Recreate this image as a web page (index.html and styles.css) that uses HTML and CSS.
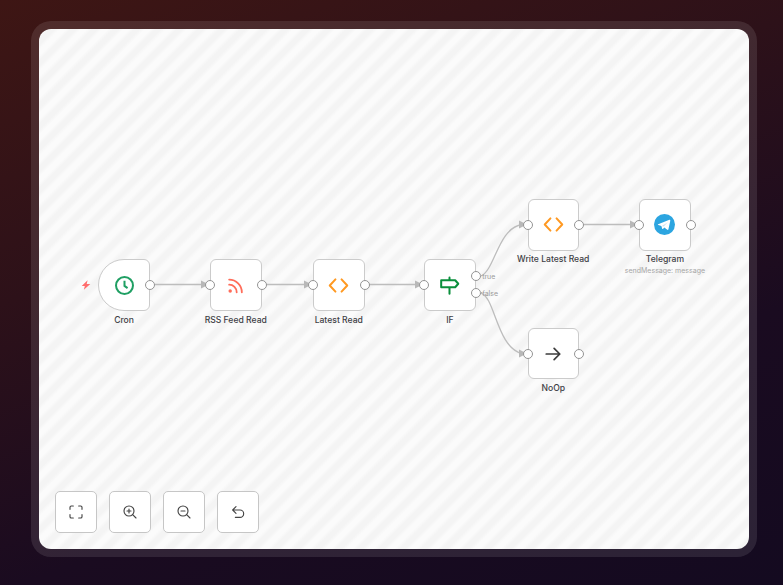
FILE: index.html
```html
<!DOCTYPE html>
<html lang="en">
<head>
<meta charset="utf-8">
<title>Workflow</title>
<link rel="stylesheet" href="styles.css">
</head>
<body>
<main class="stage">
  <div class="frame">
    <section class="canvas">
      <svg class="wires" width="710" height="520" viewBox="0 0 710 520">
        <g class="wire">
          <path d="M116 255.500H166"/>
          <path d="M227 255.500H269"/>
          <path d="M330 255.500H380"/>
          <path d="M442 247C456 241 459 199 483 195.500"/>
          <path d="M442 264C456 268 458 319 483 324.500"/>
          <path d="M545 195.500H592"/>
        </g>
        <g class="head">
          <path d="M162 251.500L170 255.500L162 259.500Z"/>
          <path d="M265 251.500L273 255.500L265 259.500Z"/>
          <path d="M376 251.500L384 255.500L376 259.500Z"/>
          <path d="M480 191.500L488 195.500L480 199.500Z"/>
          <path d="M480 320.500L488 324.500L480 328.500Z"/>
          <path d="M591 191.500L599 195.500L591 199.500Z"/>
        </g>
      </svg>

      <svg class="bolt" viewBox="0 0 10 10" width="10" height="10"><path d="M6.600 0.300L0.700 5.900H3.800L2.900 9.700L9.300 4H5.700Z"/></svg>

      <article class="node n-cron">
        <div class="box box-trigger">
          <svg class="icon" viewBox="0 0 24 24"><circle cx="12" cy="12" r="9.700" class="s-green"/><path d="M12 6.500V12.500L15.500 15" class="s-green"/></svg>
        </div>
        <span class="port out"></span>
        <p class="label">Cron</p>
      </article>

      <article class="node n-rss">
        <div class="box">
          <svg class="icon icon-rss" viewBox="0 0 24 24"><path d="M4 11A9.500 9.500 0 0 1 13.500 20.500M4 4.500A16 16 0 0 1 20 20.500" class="s-coral"/><circle cx="5.300" cy="19" r="2.200" class="f-coral"/></svg>
        </div>
        <span class="port in"></span><span class="port out"></span>
        <p class="label">RSS Feed Read</p>
      </article>

      <article class="node n-latest">
        <div class="box">
          <svg class="icon" viewBox="0 0 24 24"><path d="M8.500 5L2 12L8.500 19M15.500 5L22 12L15.500 19" class="s-orange"/></svg>
        </div>
        <span class="port in"></span><span class="port out"></span>
        <p class="label">Latest Read</p>
      </article>

      <article class="node n-if">
        <div class="box">
          <svg class="icon" viewBox="0 0 24 24"><path d="M2.500 6H18.500L22 10L18.500 14H2.500ZM12 3V6M12 14V21.500" class="s-dgreen"/></svg>
        </div>
        <span class="port in"></span>
        <span class="port out-true"></span><span class="port out-false"></span>
        <span class="tag tag-true">true</span><span class="tag tag-false">false</span>
        <i class="tick tick-true"></i><i class="tick tick-false"></i>
        <p class="label">IF</p>
      </article>

      <article class="node n-write">
        <div class="box">
          <svg class="icon" viewBox="0 0 24 24"><path d="M8.500 5L2 12L8.500 19M15.500 5L22 12L15.500 19" class="s-orange"/></svg>
        </div>
        <span class="port in"></span><span class="port out"></span>
        <p class="label">Write Latest Read</p>
      </article>

      <article class="node n-telegram">
        <div class="box">
          <svg class="icon icon-tg" viewBox="0 0 24 24"><circle cx="12" cy="12" r="12" class="f-blue"/><path d="M4.800 11.800L17.600 6.600C18.300 6.400 18.800 6.700 18.600 7.600L16.500 17.400C16.300 18.200 15.800 18.300 15.200 18L11.800 15.500L10.200 17C9.900 17.300 9.600 17.400 9.400 16.900L8.400 13.700L5 12.700C4.300 12.500 4.200 12.100 4.800 11.800Z" class="f-white"/><path d="M9 13.700L15.800 9.300L11 14.400Z" class="f-pale"/></svg>
        </div>
        <span class="port in"></span><span class="port out"></span>
        <p class="label">Telegram</p>
        <p class="sub">sendMessage: message</p>
      </article>

      <article class="node n-noop">
        <div class="box">
          <svg class="icon icon-arrow" viewBox="0 0 24 24"><path d="M3 12H21M13.500 4.500L21 12L13.500 19.500" class="s-dark"/></svg>
        </div>
        <span class="port in"></span><span class="port out"></span>
        <p class="label">NoOp</p>
      </article>

      <div class="controls">
        <button class="ctl" aria-label="Fit view"><svg viewBox="0 0 24 24"><path d="M8 3H5A2 2 0 0 0 3 5V8M16 3H19A2 2 0 0 1 21 5V8M8 21H5A2 2 0 0 1 3 19V16M16 21H19A2 2 0 0 0 21 19V16"/></svg></button>
        <button class="ctl" aria-label="Zoom in"><svg viewBox="0 0 24 24"><circle cx="10.500" cy="10.500" r="7.500"/><path d="M21 21L16 16M10.500 7.500V13.500M7.500 10.500H13.500"/></svg></button>
        <button class="ctl" aria-label="Zoom out"><svg viewBox="0 0 24 24"><circle cx="10.500" cy="10.500" r="7.500"/><path d="M21 21L16 16M7.500 10.500H13.500"/></svg></button>
        <button class="ctl" aria-label="Undo"><svg viewBox="0 0 24 24"><path d="M9 4L4 9L9 14M4 9H15A5.500 5.500 0 0 1 15 20H8"/></svg></button>
      </div>
    </section>
  </div>
</main>
</body>
</html>
```
FILE: styles.css
```css
* { box-sizing: border-box; }
html, body { margin: 0; height: 100%; }
body {
  font-family: Inter, "Liberation Sans", sans-serif;
  background: #1a0c20;
  overflow: hidden;
}
.stage {
  width: 783px;
  height: 585px;
  display: flex;
  align-items: flex-start;
  justify-content: flex-start;
  background: linear-gradient(160deg, #3e1614 0%, #2d1119 35%, #1a0b20 68%, #140a20 100%);
  padding: 21px 26px 28px 31px;
}
.frame {
  width: 726px;
  height: 536px;
  padding: 8px;
  border-radius: 20px;
  background: rgba(255, 255, 255, 0.1);
}
.canvas {
  position: relative;
  width: 710px;
  height: 520px;
  border-radius: 12px;
  overflow: hidden;
  background: repeating-linear-gradient(135deg, #fbfbfb 0, #fbfbfb 4px, #f4f4f4 7.500px, #f4f4f4 11.500px, #fbfbfb 15px);
}
.wires { position: absolute; inset: 0; }
.wire path { fill: none; stroke: #bdbdbd; stroke-width: 1.300; }
.head path { fill: #b8b8b8; }
.bolt { position: absolute; left: 41.500px; top: 250.500px; }
.bolt path { fill: #ff6d6d; }

.node { position: absolute; width: 51.500px; height: 51.500px; }
.n-cron { left: 59.300px; top: 230.300px; }
.n-rss { left: 171px; top: 230.300px; }
.n-latest { left: 274px; top: 230.300px; }
.n-if { left: 385.200px; top: 230.300px; }
.n-write { left: 488.500px; top: 170px; }
.n-telegram { left: 600.200px; top: 170px; }
.n-noop { left: 488.500px; top: 298.800px; }

.box {
  width: 100%;
  height: 100%;
  display: flex;
  align-items: center;
  justify-content: center;
  background: #fff;
  border: 1.500px solid #cbcbcb;
  border-radius: 6px;
}
.box-trigger { border-radius: 26px 6px 6px 26px; }
.icon { width: 21px; height: 21px; fill: none; }
.icon-rss { width: 19px; height: 19px; }
.icon-tg { width: 21px; height: 21px; }
.icon-arrow { width: 18px; height: 18px; }
.s-green, .s-coral, .s-orange, .s-dgreen, .s-dark { fill: none; stroke-width: 2.300; }
.s-green { stroke: #1f9f63; }
.s-coral { stroke: #ff6d5a; stroke-linecap: round; }
.s-orange { stroke: #ff9922; stroke-linecap: round; stroke-linejoin: round; }
.s-dgreen { stroke: #0a8f3c; stroke-linejoin: round; stroke-linecap: round; }
.s-dark { stroke: #3d3d3d; stroke-linecap: round; stroke-linejoin: round; }
.f-coral { fill: #ff6d5a; }
.f-blue { fill: #2ca5e0; }
.f-white { fill: #fff; }
.f-pale { fill: #c8e3f2; }

.port {
  position: absolute;
  width: 10px;
  height: 10px;
  background: #fff;
  border: 1px solid #949494;
  border-radius: 50%;
}
.port.in { left: -5px; top: 20.800px; }
.port.out { right: -5px; top: 20.800px; }
.port.out-true { right: -5px; top: 11.700px; }
.port.out-false { right: -5px; top: 28.700px; }

.tag {
  position: absolute;
  left: 58px;
  font-size: 7px;
  line-height: 8px;
  color: #9a9a9a;
}
.tag-true { top: 13.500px; }
.tag-false { top: 30.500px; }
.tick {
  position: absolute;
  left: 56px;
  width: 2px;
  height: 1px;
  background: #b4b4b4;
}
.tick-true { top: 16px; }
.tick-false { top: 33px; }

.label {
  position: absolute;
  left: -30px;
  right: -30px;
  top: 54.400px;
  margin: 0;
  text-align: center;
  font-size: 8.600px;
  line-height: 12px;
  font-weight: 500;
  color: #3f3f46;
}
.sub {
  position: absolute;
  left: -30px;
  right: -30px;
  top: 67px;
  margin: 0;
  text-align: center;
  font-size: 7px;
  line-height: 10px;
  color: #a6a6a6;
}

.controls {
  position: absolute;
  left: 16px;
  bottom: 16px;
  display: flex;
  gap: 12px;
}
.ctl {
  width: 42px;
  height: 42px;
  padding: 0;
  display: flex;
  align-items: center;
  justify-content: center;
  background: #fff;
  border: 1.500px solid #c6c6c6;
  border-radius: 5px;
}
.ctl svg {
  width: 16px;
  height: 16px;
  fill: none;
  stroke: #444;
  stroke-width: 1.700;
  stroke-linecap: round;
  stroke-linejoin: round;
}
```
